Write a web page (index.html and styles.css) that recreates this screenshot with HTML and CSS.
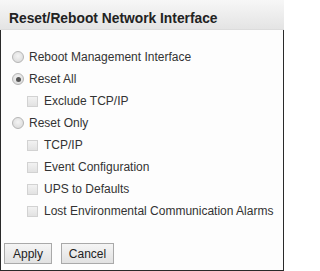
FILE: index.html
```html
<!DOCTYPE html>
<html>
<head>
<meta charset="utf-8">
<link rel="stylesheet" href="styles.css">
</head>
<body>
<div class="dialog">
  <div class="header">Reset/Reboot Network Interface</div>
  <div class="content">
    <div class="options">
      <label class="row"><span class="radio"></span><span>Reboot Management Interface</span></label>
      <label class="row"><span class="radio checked"></span><span>Reset All</span></label>
      <label class="row sub"><span class="check"></span><span>Exclude TCP/IP</span></label>
      <label class="row"><span class="radio"></span><span>Reset Only</span></label>
      <label class="row sub"><span class="check"></span><span>TCP/IP</span></label>
      <label class="row sub"><span class="check"></span><span>Event Configuration</span></label>
      <label class="row sub"><span class="check"></span><span>UPS to Defaults</span></label>
      <label class="row sub"><span class="check"></span><span>Lost Environmental Communication Alarms</span></label>
    </div>
    <div class="buttons">
      <button class="btn apply">Apply</button>
      <button class="btn cancel">Cancel</button>
    </div>
  </div>
</div>
</body>
</html>
```

FILE: styles.css
```css
html, body {
  margin: 0;
  padding: 0;
  background: #ffffff;
}
.dialog {
  width: 284px;
  height: 271px;
  display: flex;
  flex-direction: column;
  font-family: "Liberation Sans", Arial, sans-serif;
  color: #333;
}
.header {
  height: 30px;
  box-sizing: border-box;
  padding: 11px 0 0 9px;
  font-size: 13.8px;
  font-weight: bold;
  line-height: 16px;
  color: #222;
  white-space: nowrap;
  background: linear-gradient(#f7f7f7, #e4e4e4);
  border-bottom: 1px solid #dcdcdc;
}
.content {
  flex: 1;
  box-sizing: border-box;
  background: #fdfdfd;
  border-left: 1px solid #2a2a2a;
  border-right: 1px solid #2a2a2a;
  border-bottom: 1px solid #2a2a2a;
  padding: 16px 0 0 11px;
  display: flex;
  flex-direction: column;
}
.options {
  display: flex;
  flex-direction: column;
}
.row {
  height: 22px;
  display: flex;
  align-items: center;
  font-size: 12px;
  color: #333;
  white-space: nowrap;
}
.row.sub {
  padding-left: 14px;
}
.radio {
  width: 12px;
  height: 12px;
  box-sizing: border-box;
  border-radius: 50%;
  border: 1px solid #b5b5b5;
  background: radial-gradient(circle at 50% 40%, #f4f4f4, #d6d6d6);
  margin-right: 5px;
  display: flex;
  align-items: center;
  justify-content: center;
}
.radio.checked::after {
  content: "";
  width: 5px;
  height: 5px;
  border-radius: 50%;
  background: #555;
}
.check {
  width: 11px;
  height: 11px;
  box-sizing: border-box;
  border: 1px solid #d2d2d2;
  background: linear-gradient(#f2f2f2, #e2e2e2);
  margin-left: 1px;
  margin-right: 6px;
}
.buttons {
  display: flex;
  gap: 9px;
  margin-top: 21px;
  margin-left: -8px;
}
.btn {
  height: 21px;
  box-sizing: border-box;
  font-family: "Liberation Sans", Arial, sans-serif;
  font-size: 12px;
  color: #222;
  border: 1px solid #a9a9a9;
  background: linear-gradient(#f5f5f5, #e1e1e1);
  padding: 0;
  border-radius: 0;
}
.apply {
  width: 48px;
}
.cancel {
  width: 53px;
}
```
